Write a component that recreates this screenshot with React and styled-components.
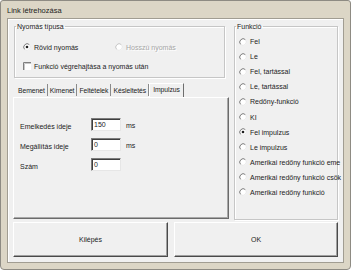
import React from 'react';
import styled, { createGlobalStyle } from 'styled-components';

const Global = createGlobalStyle`
  html, body { margin: 0; padding: 0; background: #ffffff; }
  body {
    font-family: "Liberation Sans", Arial, sans-serif;
    font-size: 7px;
    color: #1c1c1c;
  }
  * { box-sizing: border-box; }
`;

const Window = styled.div`
  width: 351px;
  height: 270px;
  background: #dcd6c6;
  border: 1px solid #8e8b83;
  border-radius: 3px 3px 4px 4px;
  display: flex;
  flex-direction: column;
  padding: 0 6px 6px 6px;
`;

const TitleBar = styled.div`
  height: 17px;
  display: flex;
  align-items: center;
  font-size: 7.5px;
  color: #222;
  padding-top: 1px;
`;

const Client = styled.div`
  flex: 1;
  background: #f0f0f0;
  border: 1px solid #a19d92;
  box-shadow: inset 1px 1px 0 #ffffff;
  display: flex;
  flex-direction: column;
  padding: 3px 5px 5px 5px;
`;

const MainRow = styled.div`
  display: flex;
  gap: 5px;
  height: 198px;
`;

const LeftCol = styled.div`
  width: 216px;
  display: flex;
  flex-direction: column;
`;

const Group = styled.fieldset`
  margin: 0 0 0 ${p => p.$ml || 0}px;
  padding: 0;
  border: 1px solid #c6c6c6;
  box-shadow: inset 1px 1px 0 #ffffff, 1px 1px 0 #ffffff;
  width: ${p => p.$w}px;
  height: ${p => p.$h}px;
  min-width: 0;
`;

const Legend = styled.legend`
  padding: 0 1px;
  margin-left: 1px;
  line-height: 9px;
  font-size: 7px;
  color: #222;
`;

const PressBody = styled.div`
  display: flex;
  flex-direction: column;
  gap: 9px;
  padding: 11px 0 0 8px;
`;

const OptionRow = styled.div`
  display: flex;
  align-items: center;
  height: 10px;
`;

const Option = styled.label`
  display: flex;
  align-items: center;
  gap: 3px;
  width: ${p => p.$w ? p.$w + 'px' : 'auto'};
  color: ${p => p.$disabled ? '#a6a6a6' : '#1c1c1c'};
  text-shadow: ${p => p.$disabled ? '1px 1px 0 #ffffff' : 'none'};
  white-space: nowrap;
`;

const TabStrip = styled.div`
  display: flex;
  align-items: flex-end;
  height: 14px;
  margin-top: 5px;
  padding-left: 3px;
`;

const Tab = styled.div`
  height: ${p => p.$active ? 14 : 12}px;
  display: flex;
  align-items: ${p => p.$active ? 'flex-start' : 'center'};
  padding: ${p => p.$active ? '2px 3px 0 3px' : '0 2px 0 2px'};
  border-right: 1px solid ${p => p.$active ? '#6e6e6e' : '#8a8a8a'};
  border-left: ${p => p.$active ? '1px solid #ffffff' : 'none'};
  border-top: ${p => p.$active ? '1px solid #ffffff' : 'none'};
  margin-bottom: ${p => p.$active ? 0 : 1}px;
  white-space: nowrap;
  font-size: 6.8px;
  letter-spacing: -0.05px;
  color: #1c1c1c;
`;

const Panel = styled.div`
  height: 122px;
  border-top: 1px solid #ffffff;
  border-left: 1px solid #ffffff;
  border-right: 1px solid #6b6b6b;
  border-bottom: 1px solid #6b6b6b;
  box-shadow: inset -1px -1px 0 #a8a8a8;
  padding: 20px 0 0 6px;
`;

const FieldGrid = styled.div`
  display: grid;
  grid-template-columns: 66px 30px auto;
  column-gap: 5px;
  row-gap: 7px;
  grid-auto-rows: 13px;
  align-items: end;
`;

const FieldLabel = styled.span`
  line-height: 9px;
  padding-bottom: ${p => p.$pb || 0}px;
  white-space: nowrap;
`;

const Input = styled.div`
  height: 13px;
  width: 30px;
  background: #ffffff;
  border-top: 1px solid #7c7c7c;
  border-left: 1px solid #7c7c7c;
  border-right: 1px solid #e6e6e6;
  border-bottom: 1px solid #e6e6e6;
  box-shadow: inset 1px 1px 0 #3e3e3e;
  padding: 2px 0 0 2px;
  line-height: 8px;
  font-size: 7px;
`;

const FuncBody = styled.div`
  display: flex;
  flex-direction: column;
  padding: 3px 0 0 4px;
`;

const FuncRow = styled.div`
  height: 15.1px;
  display: flex;
  align-items: center;
`;

const ButtonRow = styled.div`
  display: flex;
  gap: 6px;
  margin-top: 2px;
  height: 35px;
`;

const Button = styled.div`
  width: ${p => p.$w}px;
  height: 35px;
  display: flex;
  align-items: center;
  justify-content: center;
  background: #f0f0f0;
  border-top: 1px solid #ffffff;
  border-left: 1px solid #ffffff;
  border-right: 1px solid #4a4a4a;
  border-bottom: 1px solid #4a4a4a;
  box-shadow: inset -1px -1px 0 #a0a0a0;
  color: #1c1c1c;
`;

function Radio({ checked, disabled }) {
  const dark = disabled ? '#c4c4c4' : '#7a7a7a';
  return (
    <svg width="8" height="8" viewBox="0 0 8 8" style={{ flex: 'none' }}>
      <circle cx="4" cy="4" r="3.4" fill="#ffffff" />
      <path d="M6.4 1.6 A3.4 3.4 0 0 0 1.6 6.4" fill="none" stroke={dark} strokeWidth="1" />
      <path d="M6.4 1.6 A3.4 3.4 0 0 1 1.6 6.4" fill="none" stroke="#e4e4e4" strokeWidth="0.8" />
      {checked && <circle cx="4" cy="4" r="1.3" fill="#1e1e1e" />}
    </svg>
  );
}

function Check() {
  return (
    <svg width="8" height="8" viewBox="0 0 8 8" style={{ flex: 'none' }}>
      <rect x="0" y="0" width="8" height="8" fill="#ffffff" />
      <path d="M0.5 8 V0.5 H8" fill="none" stroke="#808080" strokeWidth="1" />
      <path d="M1.5 8 V1.5 H8" fill="none" stroke="#c8c8c8" strokeWidth="1" />
    </svg>
  );
}

const functions = [
  'Fel',
  'Le',
  'Fel, tartással',
  'Le, tartással',
  'Redőny-funkció',
  'KI',
  'Fel impulzus',
  'Le impulzus',
  'Amerikai redőny funkció eme',
  'Amerikai redőny funkció csök',
  'Amerikai redőny funkció',
];

const tabs = ['Bemenet', 'Kimenet', 'Feltételek', 'Késleltetés', 'Impulzus'];

const fields = [
  { label: 'Emelkedés ideje', value: '150', unit: 'ms' },
  { label: 'Megállítás ideje', value: '0', unit: 'ms' },
  { label: 'Szám', value: '0', unit: '' },
];

export default function App() {
  return (
    <>
      <Global />
      <Window>
        <TitleBar>Link létrehozása</TitleBar>
        <Client>
          <MainRow>
            <LeftCol>
              <Group $w={211} $h={56} $ml={1}>
                <Legend>Nyomás típusa</Legend>
                <PressBody>
                  <OptionRow>
                    <Option $w={92}><Radio checked />Rövid nyomás</Option>
                    <Option $disabled><Radio disabled />Hosszú nyomás</Option>
                  </OptionRow>
                  <OptionRow>
                    <Option><Check />Funkció végrehajtása a nyomás után</Option>
                  </OptionRow>
                </PressBody>
              </Group>
              <TabStrip>
                {tabs.map(t => (
                  <Tab key={t} $active={t === 'Impulzus'}>{t}</Tab>
                ))}
              </TabStrip>
              <Panel>
                <FieldGrid>
                  {fields.map(f => (
                    <React.Fragment key={f.label}>
                      <FieldLabel>{f.label}</FieldLabel>
                      <Input>{f.value}</Input>
                      <FieldLabel $pb={1}>{f.unit}</FieldLabel>
                    </React.Fragment>
                  ))}
                </FieldGrid>
              </Panel>
            </LeftCol>
            <Group $w={104} $h={198}>
              <Legend>Funkció</Legend>
              <FuncBody>
                {functions.map(f => (
                  <FuncRow key={f}>
                    <Option><Radio checked={f === 'Fel impulzus'} />{f}</Option>
                  </FuncRow>
                ))}
              </FuncBody>
            </Group>
          </MainRow>
          <ButtonRow>
            <Button $w={155}>Kilépés</Button>
            <Button $w={164}>OK</Button>
          </ButtonRow>
        </Client>
      </Window>
    </>
  );
}
